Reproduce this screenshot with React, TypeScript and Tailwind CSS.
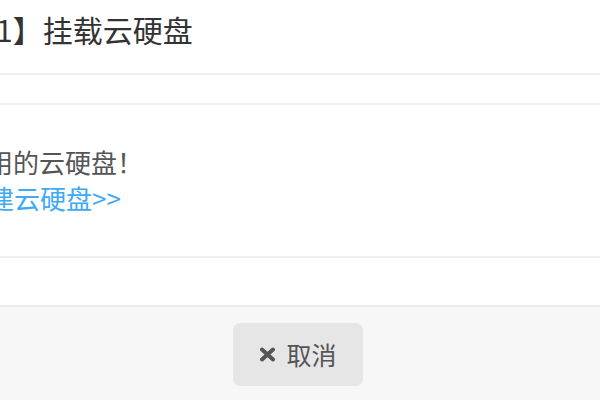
const font = { fontFamily: '"Noto Sans CJK SC", "Noto Sans", sans-serif' };

export default function App() {
  return (
    <div className="w-[600px] h-[400px] bg-white overflow-hidden flex flex-col" style={font}>
      <div className="h-[75px] shrink-0 border-b-2 border-[#efefef] pt-[11px]">
        <h1 className="ml-[-4px] text-[30px] leading-[36px] text-[#333] whitespace-nowrap">1】挂载云硬盘</h1>
      </div>
      <div className="h-[30px] shrink-0 border-b-2 border-[#efefef]" />
      <div className="h-[153px] shrink-0 border-b-2 border-[#efefef] pt-[37px]">
        <p className="ml-[-13px] text-[26px] leading-[40px] text-[#555] whitespace-nowrap">用的云硬盘！</p>
        <a className="ml-[-12px] mt-[-4px] block text-[26px] leading-[40px] text-[#3ea9f5] whitespace-nowrap">建云硬盘&gt;&gt;</a>
      </div>
      <div className="h-[49px] shrink-0 border-b-2 border-[#ececec]" />
      <div className="flex-1 bg-[#f7f7f7] pt-[16px]">
        <button className="ml-[233px] w-[130px] h-[63px] rounded-[7px] bg-[#e6e6e6] flex items-center justify-center gap-[10px] text-[25px] text-[#555]">
          <svg width="17" height="15" viewBox="0 0 17 15">
            <path d="M3 2.5 L14 12.5 M14 2.5 L3 12.5" stroke="#555" strokeWidth="4" strokeLinecap="round" />
          </svg>
          <span className="leading-none">取消</span>
        </button>
      </div>
    </div>
  );
}
